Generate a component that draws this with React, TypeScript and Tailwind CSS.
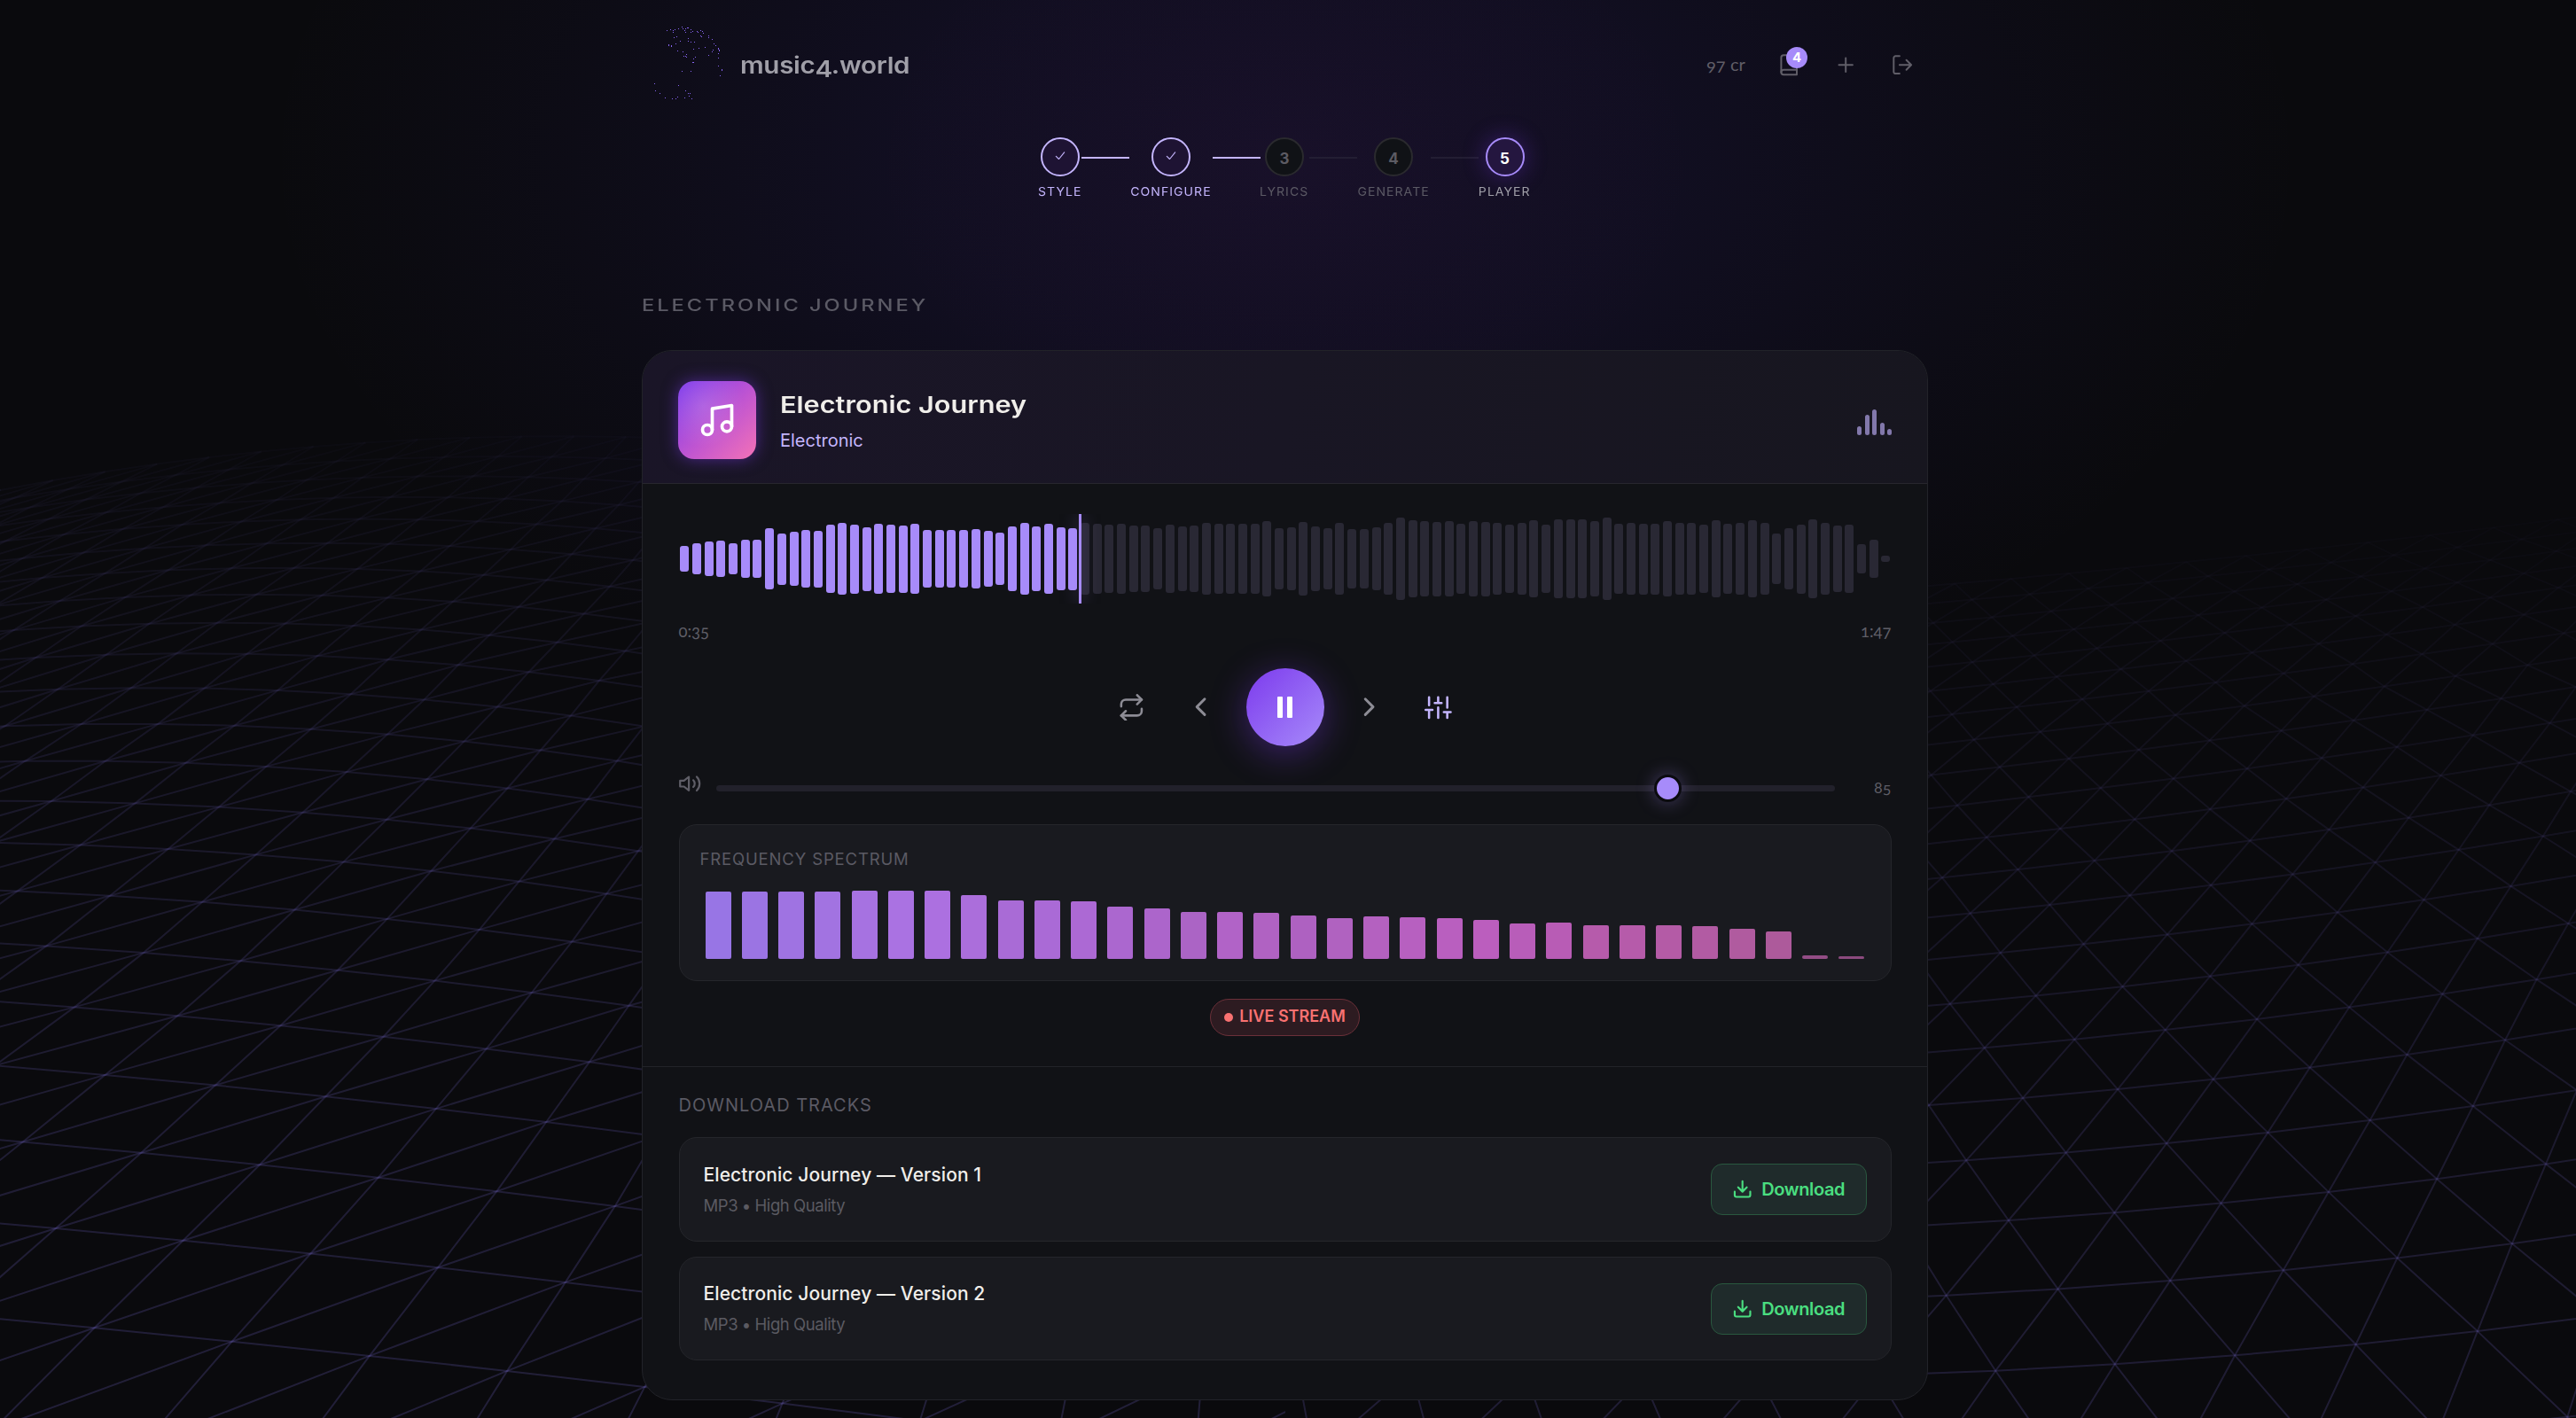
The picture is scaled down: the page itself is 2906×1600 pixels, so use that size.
import React from 'react';

// Half-lattice rows, front to back. x0/y0/y1 are in the scene's own units.
interface MeshSide {
  x0: number[];
  step: number[];
  y0: number[];
  y1: number[];
  sag: number[];
  shift: number;
}

const LEFT: MeshSide = {
  x0: [-640, -300, -15, 232, 450, 638, 800, 942, 1068, 1178, 1275, 1362, 1444, 1516, 1582, 1645, 1703, 1757, 1808, 1855, 1898, 1940, 1978, 2015, 2050],
  step: [446, 403, 367, 338, 313, 291, 271, 253, 238.5, 227, 215.5, 206, 197.5, 188, 180, 173, 167, 161, 155, 150, 145, 140, 136, 132, 128],
  y0: [2000, 1775, 1585, 1422, 1281, 1158, 1049, 954, 868, 790, 720, 658, 600, 548, 497, 450, 408, 370, 335, 304, 276, 252, 232, 215, 200],
  y1: [2098, 1873, 1683, 1521, 1381, 1260, 1149, 1053, 962, 880, 802, 732, 667, 604, 547, 489, 440, 392, 347, 304, 262, 224, 188, 155, 122],
  sag: [0, 0, -1, -3, -4, -5, -6, -8, -10, -13, -16, -18, -21, -23, -24, -25, -26, -26, -26, -26, -26, -26, -26, -26, -26],
  shift: 0,
};

const RIGHT: MeshSide = {
  x0: [1380, 1130, 915, 730, 571, 434, 315, 209, 115, 30, -48, -113, -173, -236, -296, -346, -388, -430, -468, -503, -536, -567, -596, -623],
  step: [360, 336, 314, 296, 277, 261, 246, 232, 220, 210, 201, 192, 183, 176, 170, 163, 156, 152, 147, 143, 139, 135, 131, 128],
  y0: [1990, 1795, 1635, 1502, 1388, 1283, 1191, 1106, 1028, 959, 891, 829, 772, 720, 668, 619, 574, 533, 495, 459, 426, 395, 366, 340],
  y1: [1900, 1720, 1565, 1422, 1298, 1187, 1085, 994, 912, 837, 768, 702, 643, 588, 537, 490, 447, 408, 372, 340, 312, 286, 262, 240],
  sag: [6, 8, 10, 11, 11, 11, 11, 11, 10, 10, 9, 8, 8, 7, 6, 5, 5, 5, 5, 5, 5, 5, 5, 5],
  shift: 2186,
};

const node = (m: MeshSide, i: number, j: number) => {
  const x = m.x0[j] + m.step[j] * i + (m.shift ? i * i : 0);
  const u = x / 1568;
  const y = m.y0[j] * (1 - u) + m.y1[j] * u + 4 * m.sag[j] * u * (1 - u);
  return `${(m.shift + x / 2.1778).toFixed(1)} ${(400 + y / 1.3067).toFixed(1)}`;
};

const meshPaths = (m: MeshSide) => {
  const n = m.x0.length;
  const lo = -18;
  const hi = 18;
  const rows: string[] = [];
  const cols: string[] = [];
  const diags: string[] = [];
  for (let j = 0; j < n; j++) {
    for (let i = lo; i < hi; i++) rows.push(`M${node(m, i, j)}L${node(m, i + 1, j)}`);
  }
  for (let j = 0; j < n - 1; j++) {
    for (let i = lo; i < hi; i++) {
      cols.push(`M${node(m, i, j)}L${node(m, i, j + 1)}`);
      diags.push(`M${node(m, i, j)}L${node(m, i + 1, j + 1)}`);
    }
  }
  return [rows.join(''), cols.join(''), diags.join('')];
};

const Terrain: React.FC = () => (
  <div className="absolute inset-0 flex">
    <svg
      className="h-[1600px] w-[1450px] [mask-image:linear-gradient(to_bottom,transparent_420px,rgba(0,0,0,.3)_620px,rgba(0,0,0,.65)_900px,rgba(0,0,0,.9)_1300px,black_1600px)]"
      viewBox="0 0 1450 1600"
      fill="none"
      strokeWidth="2"
      stroke="rgba(118,102,205,.23)"
    >
      {meshPaths(LEFT).map((d, k) => <path key={k} d={d} />)}
    </svg>
    <svg
      className="h-[1600px] w-[1456px] [mask-image:linear-gradient(to_bottom,transparent_480px,rgba(0,0,0,.14)_640px,rgba(0,0,0,.5)_950px,rgba(0,0,0,.85)_1300px,black_1600px)]"
      viewBox="1450 0 1456 1600"
      fill="none"
      strokeWidth="2"
      stroke="rgba(118,102,205,.21)"
    >
      {meshPaths(RIGHT).map((d, k) => <path key={k} d={d} />)}
    </svg>
  </div>
);

// Logo particles on a 300-unit field
const DOTS = [
  [68, 43], [80, 40], [89, 43], [94, 40], [88, 49], [106, 37], [118, 31], [121, 37], [130, 37], [127, 43], [130, 49],
  [136, 34], [139, 34], [148, 40], [154, 46], [148, 49], [169, 46], [172, 49], [181, 43], [187, 46], [190, 52], [181, 61],
  [184, 64], [208, 61], [208, 67], [220, 73], [226, 88], [232, 94], [241, 103], [241, 106], [244, 109], [244, 112],
  [223, 109], [220, 115], [208, 127], [241, 121], [241, 136], [241, 163], [253, 175], [253, 178], [247, 196], [91, 67],
  [100, 64], [112, 79], [139, 70], [139, 79], [148, 82], [160, 82], [97, 88], [73, 91], [73, 94], [82, 94], [82, 97],
  [103, 112], [121, 115], [157, 106], [175, 103], [196, 100], [124, 130], [130, 130], [133, 124], [133, 133], [163, 133],
  [157, 139], [154, 151], [157, 151], [118, 181], [148, 181], [25, 223], [28, 247], [43, 256], [61, 271], [85, 274],
  [97, 274], [103, 268], [106, 229], [130, 247], [139, 256], [145, 256], [142, 265], [127, 271], [151, 274],
];

const icon = {
  viewBox: '0 0 24 24',
  fill: 'none',
  stroke: 'currentColor',
  strokeWidth: 2,
  strokeLinecap: 'round' as const,
  strokeLinejoin: 'round' as const,
};

const Header: React.FC = () => (
  <header className="flex h-[147px] items-center pl-1.5">
    <svg viewBox="0 0 300 300" className="-mt-[7px] size-[100px]" fill="#8664f0" shapeRendering="crispEdges">
      {DOTS.map(([x, y], k) => <rect key={k} x={x - 2} y={y - 2} width="3" height="3" />)}
    </svg>
    <span className="ml-[5px] origin-left scale-x-[1.14] text-[26px] leading-[30px] font-semibold tracking-[-0.3px] text-[#a09fa8]">
      music<span className="relative top-[4px]">4</span>.world
    </span>
    <div className="ml-auto flex items-center text-[#605e68]">
      <span className="-mt-[3px] mr-[21px] font-[Lato] text-[20px] leading-6 tracking-[0.1px] oldstyle-nums">97 cr</span>
      <button className="relative flex h-14 w-[57px] items-center justify-center">
        <svg {...icon} strokeWidth={1.8} className="size-[26.4px]">
          <path d="M4 19.5A2.5 2.5 0 0 1 6.5 17H20" />
          <path d="M6.5 2H20v20H6.5A2.5 2.5 0 0 1 4 19.5v-15A2.5 2.5 0 0 1 6.5 2z" />
        </svg>
        <span className="absolute top-[7px] left-[25px] flex size-6 items-center justify-center rounded-full bg-[#a78bfa] text-[15px] leading-none font-bold text-white">4</span>
      </button>
      <button className="flex h-14 w-[71px] items-center justify-center">
        <svg {...icon} strokeWidth={1.8} className="size-[26.4px]"><path d="M12 5v14M5 12h14" /></svg>
      </button>
      <button className="flex h-14 w-[57px] items-center justify-center">
        <svg {...icon} strokeWidth={1.8} className="size-[26.4px]">
          <path d="M9 21H5a2 2 0 0 1-2-2V5a2 2 0 0 1 2-2h4M16 17l5-5-5-5M21 12H9" />
        </svg>
      </button>
    </div>
  </header>
);

const STEPS = [
  { label: 'STYLE', state: 'done', width: 'w-[48px]' },
  { label: 'CONFIGURE', state: 'done', width: 'w-[94px]' },
  { label: 'LYRICS', state: 'todo', width: 'w-[55px]' },
  { label: 'GENERATE', state: 'todo', width: 'w-[83px]' },
  { label: 'PLAYER', state: 'active', width: 'w-[60px]' },
];

const circleStyles: Record<string, string> = {
  done: 'border-[#c4b5fd] bg-[#1e1333] text-[#c4b5fd]',
  todo: 'border-[#2a2a2e] bg-[#101216] text-[#5c5b63]',
  active: 'border-[#a78bfa] bg-[#24163f] text-white shadow-[0_0_26px_rgba(124,58,237,0.35)]',
};

const labelStyles: Record<string, string> = {
  done: 'text-[#c4b5fd]',
  todo: 'text-[#5c5a65]',
  active: 'text-[#a09fa8]',
};

const Stepper: React.FC = () => (
  <div className="flex items-start justify-center pt-2">
    {STEPS.map((s, k) => (
      <React.Fragment key={s.label}>
        {k > 0 && <div className={`mt-[22px] h-0.5 w-[54px] ${k < 3 ? 'bg-[#c4b5fd]' : 'bg-[#231e33]'}`} />}
        <div className={`flex flex-col items-center ${s.width}`}>
          <div className={`flex size-11 items-center justify-center rounded-full border-2 text-[17px] font-bold ${circleStyles[s.state]}`}>
            {s.state === 'done' ? (
              <svg {...icon} strokeWidth={2} className="-mt-0.5 size-[14px]"><path d="M20 5 9.5 18 4 12.5" /></svg>
            ) : (
              <span className="mt-[5px]">{k + 1}</span>
            )}
          </div>
          <span className={`mt-2 scale-x-[1.04] text-[13.5px] leading-[18px] tracking-[1px] whitespace-nowrap ${labelStyles[s.state]}`}>{s.label}</span>
        </div>
      </React.Fragment>
    ))}
  </div>
);

const TrackHeader: React.FC = () => (
  <div className="flex h-[150px] items-center border-b border-[#27262e] bg-[linear-gradient(100deg,#1a1527,#191624_50%,#17161f)] pr-10 pl-[40px]">
    <div className="mb-[-7px] flex size-[88px] items-center justify-center rounded-[18px] bg-[radial-gradient(circle_at_32%_32%,rgba(255,255,255,.14),transparent_55%),linear-gradient(135deg,#7c3aed,#c256d0_55%,#f472b6)] shadow-[0_0_18px_rgba(124,58,237,0.5)]">
      <svg {...icon} className="size-11 text-white">
        <path d="M9 18V5l12-2v13" />
        <circle cx="6" cy="18" r="3" />
        <circle cx="18" cy="16" r="3" />
      </svg>
    </div>
    <div className="mt-[9px] ml-[27px]">
      <h2 className="origin-left scale-x-[1.18] text-[26px] leading-[34px] font-semibold text-[#f0eeea]">Electronic Journey</h2>
      <p className="mt-[9px] text-[20px] leading-7 text-[#c4b5fd]">Electronic</p>
    </div>
    <div className="mt-[10px] ml-auto flex h-[30px] items-end gap-[3.4px]">
      <i className="h-[10px] w-[5px] rounded-full bg-[#8278ab]" />
      <i className="h-[23px] w-[5px] rounded-full bg-[#8278ab]" />
      <i className="h-[29px] w-[5px] rounded-full bg-[#8278ab]" />
      <i className="h-[14px] w-[5px] rounded-full bg-[#8278ab]" />
      <i className="h-[7px] w-[5px] rounded-full bg-[#8278ab]" />
    </div>
  </div>
);

// Peak heights in thirds of a pixel from the centre line
const PEAKS = [
  43, 53, 58, 61, 52, 64, 64, 103, 87, 91, 97, 96, 116, 121, 117, 108, 118, 115, 114, 118, 97, 97, 98, 97, 100, 94, 88,
  109, 122, 110, 118, 107, 105, 121, 118, 115, 118, 112, 112, 103, 116, 110, 113, 122, 119, 119, 118, 119, 127, 103,
  106, 124, 110, 103, 121, 100, 101, 107, 121, 139, 130, 127, 126, 127, 118, 127, 126, 121, 116, 121, 130, 116, 133,
  133, 133, 128, 139, 118, 121, 120, 120, 127, 121, 121, 115, 131, 118, 122, 131, 121, 85, 103, 117, 133, 121, 113, 115,
  49, 64, 11,
];

const Waveform: React.FC = () => (
  <div className="relative flex h-[101px] items-center overflow-hidden">
    {PEAKS.map((p, k) => (
      <div key={k} className="flex flex-1 justify-center">
        <div className={`w-[10px] rounded-[3px] ${k < 33 ? 'bg-[#a78bfa]' : 'bg-[#292834]'}`} style={{ height: (p * 2) / 3 }} />
      </div>
    ))}
    <div className="absolute inset-y-0 left-[451.5px] w-[3px] bg-[#a78bfa] shadow-[0_0_18px_rgba(167,139,250,0.5)]" />
  </div>
);

const Controls: React.FC = () => (
  <div className="flex h-[88px] items-center justify-center gap-[17.6px] text-[#8d8c95]">
    <button className="flex w-[56px] justify-center">
      <svg {...icon} strokeWidth={2} className="size-[30.8px]">
        <path d="m17 1 4 4-4 4" />
        <path d="M3 11V9a4 4 0 0 1 4-4h14M7 23l-4-4 4-4" />
        <path d="M21 13v2a4 4 0 0 1-4 4H3" />
      </svg>
    </button>
    <button className="flex w-[66px] justify-center">
      <svg {...icon} strokeWidth={2} className="size-[35.2px]"><path d="m15 18-6-6 6-6" /></svg>
    </button>
    <button className="flex size-[88px] items-center justify-center gap-[5px] rounded-full bg-[linear-gradient(135deg,#7c3aed,#a78bfa)] shadow-[0_8px_40px_rgba(124,58,237,0.4)]">
      <i className="h-6 w-1.5 rounded-[1px] bg-white" />
      <i className="h-6 w-1.5 rounded-[1px] bg-white" />
    </button>
    <button className="flex w-[66px] justify-center">
      <svg {...icon} strokeWidth={2} className="size-[35.2px]"><path d="m9 18 6-6-6-6" /></svg>
    </button>
    <button className="flex w-[56px] justify-center text-[#c4b5fd]">
      <svg {...icon} strokeWidth={2} className="size-[30.8px]">
        <path d="M4 21v-7M4 10V3M12 21v-9M12 8V3M20 21v-5M20 12V3M1 14h6M9 8h6M17 16h6" />
      </svg>
    </button>
  </div>
);

const Volume: React.FC = () => (
  <div className="flex h-[32px] items-center text-[#5f5e67]">
    <svg {...icon} strokeWidth={2} className="-mt-2.5 -ml-[1px] size-[26.4px]">
      <path d="M11 5 6 9H2v6h4l5 4z" />
      <path d="M15.54 8.46a5 5 0 0 1 0 7.07M19.07 4.93a10 10 0 0 1 0 14.14" />
    </svg>
    <div className="relative ml-[17px] h-[7px] w-[1262px] rounded-full bg-[#22212b]">
      <div className="absolute -top-[12px] left-[1058px] size-[31px] rounded-full border-[3.5px] border-[#0b0b0f] bg-[#a78bfa] shadow-[0_0_20px_rgba(167,139,250,0.35)]" />
    </div>
    <span className="-mt-[3px] ml-auto font-[Lato] text-[18px] leading-6 oldstyle-nums">85</span>
  </div>
);

const SPECTRUM: [number, string][] = [
  [76, '#9875e5'], [76, '#9b74e3'], [76, '#9f73e2'], [76, '#a273e1'], [77, '#a672e1'], [77, '#aa72e2'], [77, '#ac70e0'],
  [72, '#ab6edb'], [66, '#a96bd6'], [66, '#aa6ad6'], [65, '#ac69d4'], [59, '#ab67cf'], [57, '#ac65cb'], [53, '#ab64c5'],
  [53, '#b163c7'], [52, '#b062c2'], [49, '#ae61c1'], [46.5, '#b062c0'], [48, '#b461c0'], [47, '#b760c0'],
  [46.5, '#b95fbf'], [44, '#bb5ebe'], [40.5, '#b85db9'], [41, '#b85cb5'], [38, '#b65bab'], [38, '#b65baa'],
  [38, '#b45ba6'], [37, '#b25ba3'], [34, '#b05b9f'], [31, '#ad5a9b'], [4.5, '#934d85'], [3.5, '#8c4a7e'],
];

const Spectrum: React.FC = () => (
  <div className="flex h-[177px] flex-col rounded-[20px] border border-[#25262b] bg-[#191a1f] px-[23px] pb-[24px]">
    <p className="mt-6 text-[18.5px] leading-7 tracking-[0.85px] text-[#5b5a64]">FREQUENCY SPECTRUM</p>
    <div className="mt-auto flex items-end">
      {SPECTRUM.map(([h, color], k) => (
        <div key={k} className="flex flex-1 justify-center">
          <div className="w-[29px] rounded-[2px]" style={{ height: h, backgroundColor: color }} />
        </div>
      ))}
    </div>
  </div>
);

const TrackRow: React.FC<{ version: number; height: string }> = ({ version, height }) => (
  <div className={`flex items-center rounded-[20px] border border-[#25262b] bg-[#191a1f] px-[27px] ${height}`}>
    <div>
      <p className="text-[21px] leading-[30px] font-medium tracking-[0.1px] text-[#f0eeea]">Electronic Journey — Version {version}</p>
      <p className="mt-[5px] text-[18.5px] leading-[28px] tracking-[-0.45px] text-[#5b5a62]">MP3 • High Quality</p>
    </div>
    <button className="ml-auto flex h-[58px] w-[176px] items-center justify-center gap-[10px] rounded-[13px] border border-[#29583f] bg-[#1f2b2b] text-[20px] font-semibold tracking-[-0.4px] text-[#4ade80]">
      <svg {...icon} strokeWidth={2.2} className="size-[23.4px]">
        <path d="M21 15v4a2 2 0 0 1-2 2H5a2 2 0 0 1-2-2v-4M7 10l5 5 5-5M12 15V3" />
      </svg>
      <span>Download</span>
    </button>
  </div>
);

const App: React.FC = () => {
  return (
    <div className="relative h-[1600px] w-[2906px] overflow-hidden bg-[#0a0a0d] pr-[7px] font-[Inter,'Open_Sans',sans-serif] antialiased">
      <div className="absolute inset-0 bg-[radial-gradient(ellipse_480px_340px_at_1450px_190px,rgba(190,40,120,.03),transparent),radial-gradient(ellipse_1150px_680px_at_1450px_180px,rgba(90,60,240,.115),rgba(90,60,240,.09)_35%,rgba(90,60,240,.04)_70%,transparent)]" />
      <Terrain />
      <main className="relative mx-auto w-[1451px]">
        <Header />
        <Stepper />
        <h1 className="mt-[100px] flex h-[40px] items-center text-[19px] font-medium tracking-[2.4px] text-[#5b5a65]">
          <span className="origin-left scale-x-[1.245]">ELECTRONIC JOURNEY</span>
        </h1>
        <section className="mt-[30px] h-[1185px] overflow-hidden rounded-[34px] border border-[#222329] bg-[#111216]">
          <TrackHeader />
          <div className="px-[40.5px] pt-[34px]">
            <Waveform />
            <div className="mt-[18px] flex h-[28px] items-center justify-between font-[Lato] text-[18.5px] text-[#5f5e67] oldstyle-nums">
              <span>0:35</span>
              <span>1:47</span>
            </div>
            <div className="mt-[27px]"><Controls /></div>
            <div className="mt-[31px]"><Volume /></div>
            <div className="mt-[25px]"><Spectrum /></div>
            <div className="mt-[20px] flex justify-center">
              <div className="flex h-[42px] w-[169px] items-center justify-center gap-[7px] rounded-full border border-[#6b3039] bg-[#2d1b21]">
                <i className="size-2.5 rounded-full bg-[#f87171]" />
                <span className="-mt-0.5 text-[18px] leading-6 font-semibold text-[#f87171]">LIVE STREAM</span>
              </div>
            </div>
          </div>
          <div className="mt-[34px] border-t border-[#222329] px-[40.5px]">
            <p className="mt-[29px] text-[20px] leading-7 tracking-[1px] text-[#5b5a64]">DOWNLOAD TRACKS</p>
            <div className="mt-[22px] flex flex-col gap-[17px]">
              <TrackRow version={1} height="h-[118px]" />
              <TrackRow version={2} height="h-[117px]" />
            </div>
          </div>
        </section>
      </main>
    </div>
  );
};

export default App;
